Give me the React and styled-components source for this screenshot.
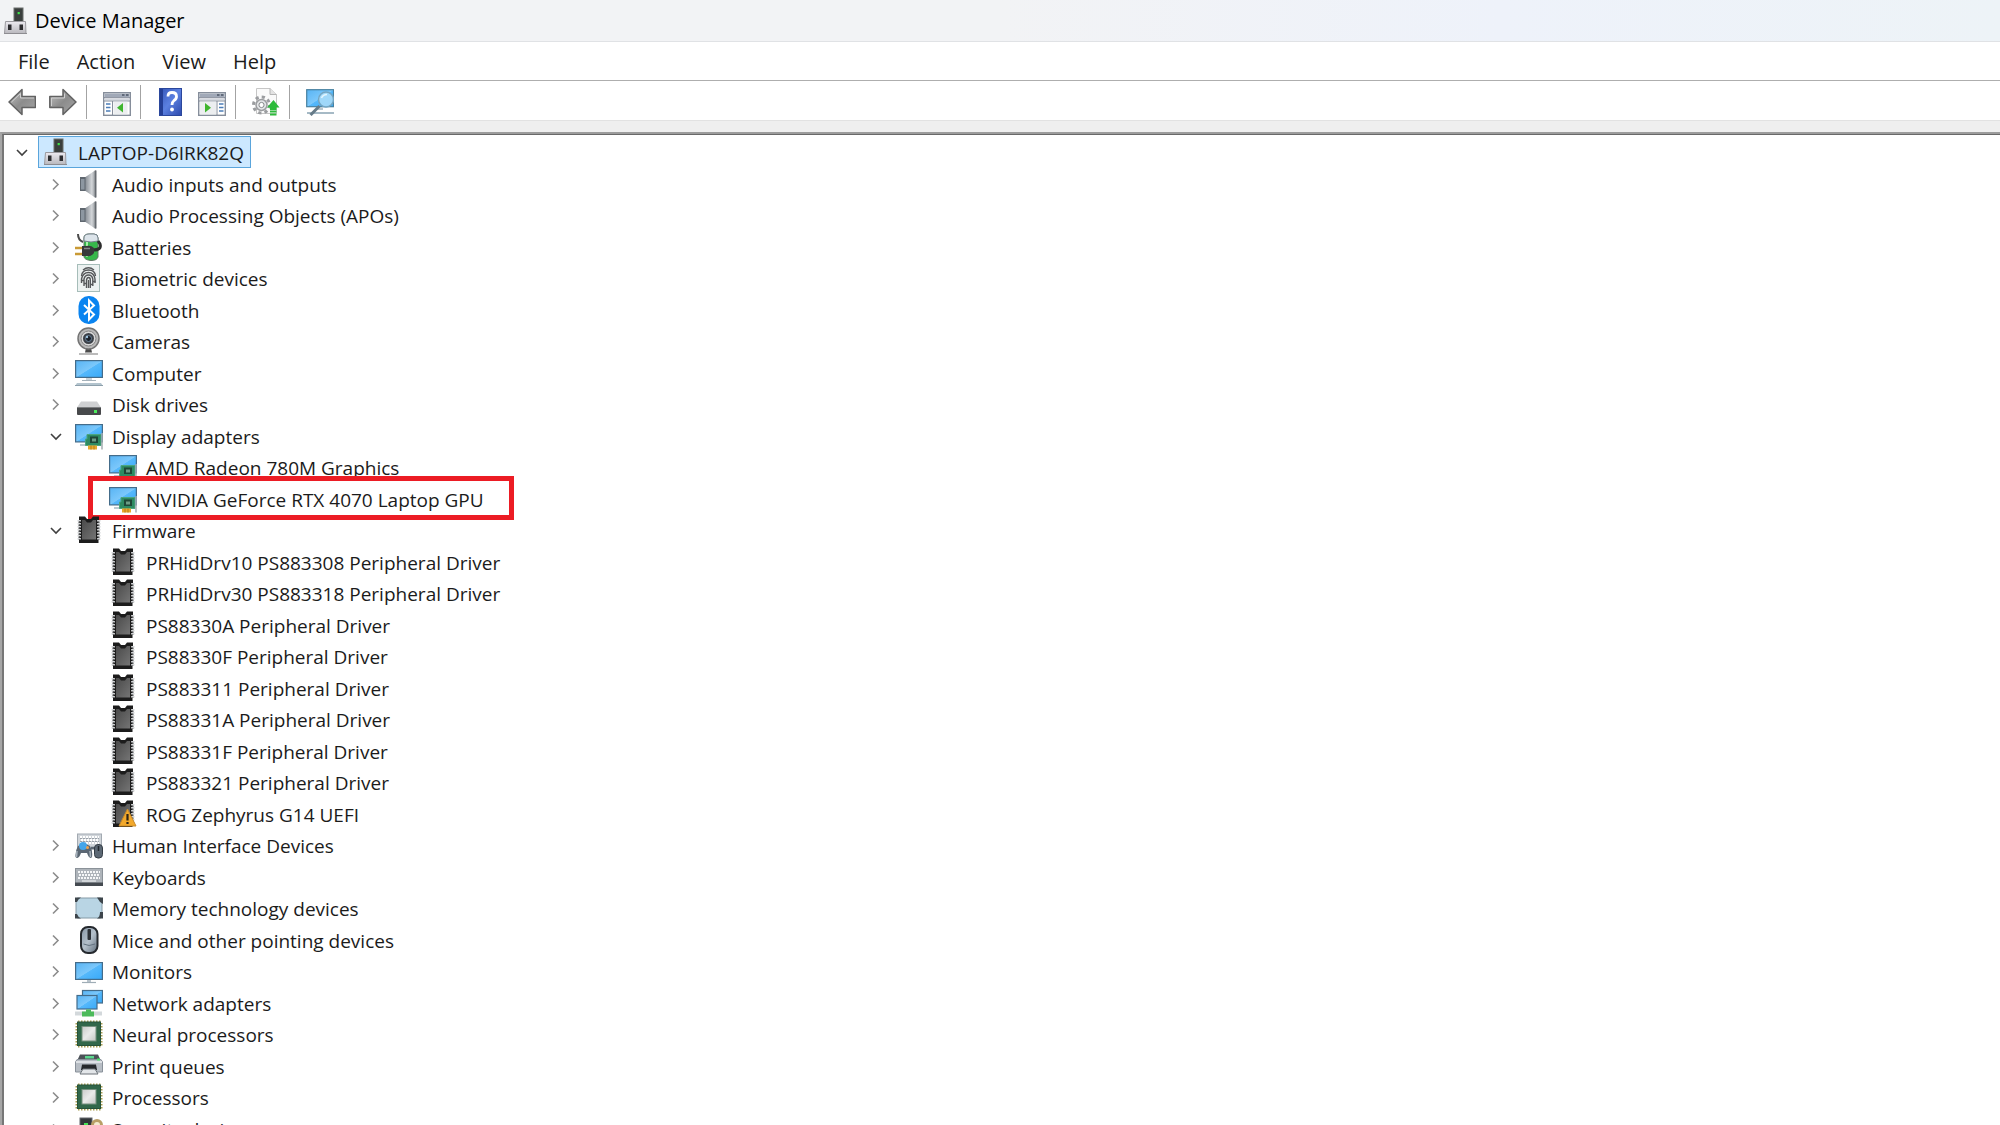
import React from 'react';
import styled, { createGlobalStyle, css } from 'styled-components';

const GlobalStyle = createGlobalStyle`
  * {
    box-sizing: border-box;
  }
  body {
    margin: 0;
    background: #fff;
    color: #1b1b1b;
    font-family: "Open Sans", "Noto Sans", sans-serif;
    font-size: 20px;
    line-height: 30px;
  }
  button {
    margin: 0;
    padding: 0;
    border: 0;
    background: none;
    color: inherit;
    font: inherit;
  }
`;

const Window = styled.div`
  display: flex;
  flex-direction: column;
  height: 100vh;
  overflow: hidden;
`;

const TitleBar = styled.header`
  display: flex;
  align-items: center;
  gap: 6px;
  flex: none;
  height: 42px;
  padding: 1px 0 0 1px;
  border-bottom: 1px solid #e0e2e5;
  background: linear-gradient(90deg, #f2f3f5 0%, #f2f3f5 50%, #eef2fa 75%, #edf3f7 100%);
`;

const Title = styled.h1`
  margin: 0;
  color: #000;
  font-size: 20px;
  font-weight: 400;
`;

const MenuBar = styled.nav`
  display: flex;
  align-items: center;
  gap: 27px;
  flex: none;
  height: 39px;
  padding: 2px 0 0 18px;
  border-bottom: 1px solid #aeaeae;
`;

const MenuButton = styled.button``;

const Toolbar = styled.div`
  display: flex;
  align-items: center;
  flex: none;
  height: 40px;
  padding: 3px 0 0 8px;
  border-bottom: 1px solid #e2e2e2;
`;

const ToolGroup = styled.div`
  display: flex;
  align-items: center;
  gap: 13px;
  height: 34px;
  padding: 0 9px 0 16px;
  border-right: 1px solid #a3a3a3;

  &:first-child {
    padding-left: 0;
  }
  &:last-child {
    border-right: 0;
  }
`;

const ToolButton = styled.button`
  display: flex;
  width: 28px;
  height: 28px;
`;

const Pane = styled.main`
  flex: 1;
  min-height: 0;
  padding-top: 11px;
  background: #efefef;
`;

const TreeFrame = styled.div`
  height: 100%;
  overflow: hidden;
  border-top: 2px solid #9c9c9c;
  border-left: 2px solid #a6a6a6;
`;

const Tree = styled.ul`
  min-height: 100%;
  margin: 0;
  padding: 1px 0 0;
  border-top: 1px solid #696969;
  border-left: 2px solid #777;
  background: #fff;
  font-size: 19px;
  list-style: none;
`;

const Row = styled.li`
  display: flex;
  align-items: stretch;
  gap: 6px;
  height: 32px;
  padding-left: ${({ $level }) => 8 + $level * 34}px;

  &:nth-child(even) {
    height: 31px;
  }
`;

const Toggle = styled.button`
  display: flex;
  align-items: center;
  justify-content: center;
  width: 20px;
`;

const ToggleSpace = styled.span`
  width: 20px;
`;

const Label = styled.span`
  position: relative;
  display: flex;
  align-items: center;
  gap: 9px;
  padding: 0 6px 0 2px;
  border: 1px solid transparent;
  white-space: nowrap;

  ${({ $selected }) => $selected && css`
    border-color: #5aa5dc;
    background: #cce8ff;
  `}

  ${({ $marked }) => $marked && css`
    &::after {
      content: '';
      position: absolute;
      inset: -8px -24px -7px -19px;
      border: 5px solid #ec1c24;
    }
  `}
`;

const Name = styled.span`
  padding-top: 2px;
`;

const Icon = styled.svg`
  display: block;
  flex: none;
  width: 28px;
  height: 28px;
`;

const Gradients = () => (
  <svg width="0" height="0" style={{ position: 'absolute' }} aria-hidden="true">
    <defs>
      <linearGradient id="screen" x1="0" y1="0" x2="1" y2="1">
        <stop offset="0" stopColor="#58b4f4" />
        <stop offset="0.5" stopColor="#7cc8fb" />
        <stop offset="0.52" stopColor="#55b8fb" />
        <stop offset="1" stopColor="#38a9f8" />
      </linearGradient>
      <linearGradient id="steel" x1="0" y1="0" x2="1" y2="0">
        <stop offset="0" stopColor="#8b9198" />
        <stop offset="0.6" stopColor="#d3d6d9" />
        <stop offset="1" stopColor="#858a8f" />
      </linearGradient>
      <linearGradient id="arrow" x1="0" y1="0" x2="1" y2="1">
        <stop offset="0" stopColor="#c4c4c4" />
        <stop offset="0.5" stopColor="#8c8c8c" />
        <stop offset="1" stopColor="#a5a5a5" />
      </linearGradient>
      <linearGradient id="chip" x1="0" y1="0" x2="1" y2="1">
        <stop offset="0" stopColor="#4a4a4a" />
        <stop offset="1" stopColor="#747474" />
      </linearGradient>
      <linearGradient id="help" x1="0" y1="0" x2="1" y2="1">
        <stop offset="0" stopColor="#3455b8" />
        <stop offset="0.5" stopColor="#5b80e0" />
        <stop offset="1" stopColor="#2c49ac" />
      </linearGradient>
      <linearGradient id="die" x1="0" y1="0" x2="1" y2="1">
        <stop offset="0" stopColor="#c9cbc9" />
        <stop offset="0.5" stopColor="#e9eae9" />
        <stop offset="1" stopColor="#c4c6c4" />
      </linearGradient>
      <linearGradient id="body" x1="0" y1="0" x2="0" y2="1">
        <stop offset="0" stopColor="#eceaf0" />
        <stop offset="1" stopColor="#b9b8bd" />
      </linearGradient>
      <linearGradient id="mouse" x1="0" y1="0" x2="1" y2="1">
        <stop offset="0" stopColor="#8494a4" />
        <stop offset="0.5" stopColor="#b4c0cb" />
        <stop offset="1" stopColor="#5d6b79" />
      </linearGradient>
    </defs>
  </svg>
);

const DeviceIcon = () => (
  <Icon viewBox="0 0 28 28">
    <rect x="13" y="1" width="9" height="14" fill="#3a3f3d" stroke="#6a6e6c" />
    <rect x="16.6" y="5" width="2.2" height="2.2" fill="#3fe04a" />
    <path d="M4.500 14.500H24.500L25 26.500H3.500Z" fill="url(#body)" stroke="#9b9a9f" />
    <path d="M3 26.500H26" stroke="#8d8c91" />
    <rect x="7" y="17.500" width="3.500" height="5.500" fill="#2d2d30" />
    <rect x="18.500" y="17.500" width="3.500" height="5.500" fill="#2d2d30" />
  </Icon>
);

const SpeakerIcon = () => (
  <Icon viewBox="0 0 28 28">
    <rect x="5" y="7" width="6" height="14" fill="#5f676f" />
    <rect x="6" y="9" width="3.500" height="10.500" fill="#8d97a1" />
    <path d="M10.500 7L20 0.500H21V27.500H20L10.500 21Z" fill="url(#steel)" />
    <path d="M19.800 0.500H21.500V27.500H19.800Z" fill="#666b70" />
  </Icon>
);

const BatteryIcon = () => (
  <Icon viewBox="0 0 28 28">
    <path d="M9 5Q9 1 14 1H19Q23 1 23 5V24Q22 27.500 16 27.500Q10 27 9 24Z" fill="#36b84a" stroke="#5e7864" />
    <path d="M9 5Q9 1 14 1H19Q23 1 23 5V8Q16 10 9 8Z" fill="#dce4ea" stroke="#77838d" />
    <path d="M12 9V24" stroke="#a8f0a8" strokeWidth="2" />
    <path d="M3 1Q3 7 8 9" fill="none" stroke="#4b4b4b" strokeWidth="2" />
    <path d="M18 17Q27 17 25 11L23 8" fill="none" stroke="#2d2d2d" strokeWidth="3" />
    <path d="M0 15H7M0 21H7" stroke="#c99a35" strokeWidth="2.5" />
    <path d="M7 13H11Q16 12 19 15V20Q16 24 11 23H7Z" fill="#37393b" />
    <path d="M9 15.500H15" stroke="#85888a" strokeWidth="1.500" />
  </Icon>
);

const FingerprintIcon = () => (
  <Icon viewBox="0 0 28 28">
    <rect x="2.500" y="0.500" width="22" height="27" fill="#ecf2f1" stroke="#a6bdb9" />
    <g fill="none" stroke="#55585a" strokeWidth="1.400">
      <path d="M8 6Q13.500 1.500 19 6" />
      <path d="M6.500 12Q7 6 13.500 6Q20 6 20.500 12" />
      <path d="M6.500 19V15Q8 8.500 13.500 8.500Q19 8.500 20 15V19" />
      <path d="M9 22V15Q10 11 13.500 11Q17 11 17.800 15V22" />
      <path d="M11.500 24V16Q12 13.500 13.500 13.500Q15.300 13.500 15.300 16V24" />
      <path d="M13.500 16V24M6.500 16.500H9M18 17.500H20.500M9 19.500H11.500M15.500 20.500H18" />
    </g>
  </Icon>
);

const BluetoothIcon = () => (
  <Icon viewBox="0 0 28 28">
    <rect x="3.500" y="0" width="21" height="28" rx="10" fill="#0a84f0" />
    <path d="M9 9L19 18.500L14 23.500V4.500L19 9.500L9 18.500" fill="none" stroke="#fff" strokeWidth="2" />
  </Icon>
);

const CameraIcon = () => (
  <Icon viewBox="0 0 28 28">
    <path d="M11 21H16L17 25.500H10Z" fill="#4b4b4b" />
    <path d="M4 27H23" stroke="#a5a5a5" strokeWidth="1.500" />
    <circle cx="13.500" cy="11.500" r="10.500" fill="#b9b9b9" stroke="#747474" strokeWidth="1.500" />
    <circle cx="13.500" cy="11.500" r="7.500" fill="#d8d8d8" stroke="#858585" />
    <circle cx="13.500" cy="11.500" r="5.500" fill="#3c4148" />
    <circle cx="13.500" cy="11.500" r="3" fill="#1b2028" stroke="#6a8399" />
    <circle cx="12" cy="10" r="1.200" fill="#9dc3de" />
  </Icon>
);

const ComputerIcon = () => (
  <Icon viewBox="0 0 28 28">
    <rect x="0.600" y="1.600" width="26.800" height="16.800" fill="url(#screen)" stroke="#446c8a" strokeWidth="1.200" />
    <path d="M11 19H17V21H11Z" fill="#c8d2d9" />
    <path d="M7 21.500H21" stroke="#a4b1ba" />
    <path d="M2 24H26L28 27H0Z" fill="#b3c4ce" />
    <path d="M0 26.500H28" stroke="#8da0ac" />
  </Icon>
);

const DiskIcon = () => (
  <Icon viewBox="0 0 28 28">
    <path d="M6 11.500H22L26 17.500H2Z" fill="#cfd0d2" />
    <rect x="2" y="17" width="24" height="8" rx="1" fill="#47494b" />
    <path d="M2 17.500H26" stroke="#7c7e80" />
    <rect x="19" y="20" width="3" height="3" fill="#4dea5c" />
  </Icon>
);

const DisplayIcon = () => (
  <Icon viewBox="0 0 28 28">
    <rect x="0.600" y="2.600" width="26.800" height="17.300" fill="url(#screen)" stroke="#446c8a" strokeWidth="1.200" />
    <path d="M5 23H12" stroke="#a4b8c4" strokeWidth="1.500" />
    <path d="M12 12.500H26V23.500H10.500V17H12Z" fill="#2e8b62" stroke="#4ba57f" />
    <path d="M15 14.500H23V21H15Z" fill="#1e4737" />
    <path d="M17 16.500H21V19.500H17Z" fill="#6c9c85" />
    <path d="M13 23.500H22V27.500H13Z" fill="#e7a92c" />
    <path d="M16 23.500V27.500M19 23.500V27.500" stroke="#b97d17" />
    <path d="M27 11V27.500" stroke="#a5adb0" strokeWidth="1.500" />
  </Icon>
);

const ChipShape = () => (
  <>
    <path d="M4 0.500H10L12 3H16L18 0.500H24V4H23.500V27H4Z" fill="#1c1c1c" />
    <path d="M7 4H10L12 6.500H16L18 4H21V23.500H7Z" fill="url(#chip)" />
    <path d="M4.200 4V24M23.800 4V24" stroke="#d4d6d8" strokeWidth="3.400" strokeDasharray="1.500 1.500" />
    <path d="M4.200 5.500V24M23.800 5.500V24" stroke="#4f5152" strokeWidth="1.400" strokeDasharray="1.500 1.500" />
  </>
);

const ChipIcon = () => (
  <Icon viewBox="0 0 28 28">
    <ChipShape />
  </Icon>
);

const ChipWarningIcon = () => (
  <Icon viewBox="0 0 28 28">
    <ChipShape />
    <path d="M18.500 9L27 26H10Z" fill="#f3a92b" stroke="#c88a2b" strokeLinejoin="round" />
    <path d="M18.500 14V20.500M18.500 22V24" stroke="#2d2417" strokeWidth="2.200" />
  </Icon>
);

const HidIcon = () => (
  <Icon viewBox="0 0 28 28">
    <rect x="2.500" y="3" width="24" height="15" fill="#d0d5da" stroke="#a2a9b1" />
    <path d="M5 6H24M6 9H24M5 12H24" stroke="#fff" strokeWidth="1.800" strokeDasharray="2 1" />
    <path d="M5 7.500H24M5 10.500H24" stroke="#9aa1a9" strokeDasharray="2 1" />
    <path d="M3 15Q9 11 15 15Q18 20 17 26Q14.500 29 12 22H6Q3.500 29 0.500 26Q0 20 3 15Z" fill="#5b6773" />
    <path d="M2 20L1.500 26M15 20L15.500 26" stroke="#a9b4be" strokeWidth="1.500" />
    <circle cx="8" cy="15" r="4" fill="#44a5ea" />
    <circle cx="12.500" cy="16.500" r="1.500" fill="#f2a24b" />
    <path d="M16 17H20" stroke="#5b6773" strokeWidth="2.500" />
    <rect x="19.500" y="13.500" width="8" height="13.500" rx="3.500" fill="#5c6874" stroke="#353d45" />
    <path d="M23.500 15V20" stroke="#22282e" strokeWidth="1.500" />
  </Icon>
);

const KeyboardIcon = () => (
  <Icon viewBox="0 0 28 28">
    <rect x="0.500" y="5.500" width="27" height="15" fill="#aeb4ba" stroke="#8b9299" />
    <path d="M3 9H25M4 12H25M3 15H25" stroke="#f5f7f8" strokeWidth="2" strokeDasharray="2 1" />
    <path d="M7 18H21" stroke="#f5f7f8" />
    <rect x="0" y="19.500" width="28" height="3.500" fill="#444a50" />
  </Icon>
);

const MemoryIcon = () => (
  <Icon viewBox="0 0 28 28">
    <rect x="1" y="4" width="26" height="20" rx="2" fill="#b9d5e4" stroke="#849aa6" />
    <path d="M0 8V3.500H6Q3 5 2 8ZM22 3.500H28V10L25 8ZM0 20V24.500H6Q3 23 2 20ZM28 18V24.500H22Q25 23 25 18Z" fill="#3d454b" />
  </Icon>
);

const MouseIcon = () => (
  <Icon viewBox="0 0 28 28">
    <rect x="6" y="1" width="16.500" height="26" rx="7" fill="url(#mouse)" stroke="#25292e" strokeWidth="2" />
    <rect x="12.500" y="3" width="3.500" height="11" rx="1" fill="#2d3238" />
    <path d="M8.500 18Q14 21 20 18" fill="none" stroke="#62717f" />
  </Icon>
);

const MonitorIcon = () => (
  <Icon viewBox="0 0 28 28">
    <rect x="0.600" y="5.600" width="26.800" height="16.800" fill="url(#screen)" stroke="#446c8a" strokeWidth="1.200" />
    <path d="M12 23H16V25H12Z" fill="#b9c4cc" />
    <path d="M7 25.500H21" stroke="#9fadb6" strokeWidth="1.200" />
  </Icon>
);

const NetworkIcon = () => (
  <Icon viewBox="0 0 28 28">
    <rect x="7.500" y="1.500" width="20" height="12.500" fill="url(#screen)" stroke="#446c8a" strokeWidth="1.200" />
    <rect x="2" y="6.500" width="20" height="13.500" fill="url(#screen)" stroke="#446c8a" strokeWidth="1.200" />
    <path d="M0 24.500H27" stroke="#d3d8db" strokeWidth="4" />
    <path d="M11 20.500H16V22.500H19V27.500H7V22.500H11Z" fill="#4cba5b" />
  </Icon>
);

const ProcessorIcon = () => (
  <Icon viewBox="0 0 28 28">
    <path d="M3 1.500H26M3 26.500H26" stroke="#a79d52" strokeWidth="2" strokeDasharray="1.500 1.500" />
    <path d="M1.500 3V26M26.500 3V26" stroke="#a79d52" strokeWidth="2" strokeDasharray="1.500 1.500" />
    <rect x="2.500" y="2" width="23" height="23.500" fill="#31674a" stroke="#26523a" />
    <rect x="7" y="6.500" width="14" height="14.500" fill="url(#die)" stroke="#77917f" />
  </Icon>
);

const PrinterIcon = () => (
  <Icon viewBox="0 0 28 28">
    <path d="M5 2.500H23L26 9H2Z" fill="#4b5157" />
    <path d="M10 4H19V6.500H10Z" fill="#5ad78d" />
    <path d="M2 7.500H26L27.500 10V20H0.500V10Z" fill="#b7bdc4" stroke="#89919a" />
    <path d="M1 10H27" stroke="#dde1e5" strokeWidth="2" />
    <rect x="22" y="6.500" width="3" height="2" fill="#4ce06c" />
    <path d="M7 12.500H21L22 18H6Z" fill="#25282b" />
    <path d="M8 17H20L23 22H5Z" fill="#e3e6e9" stroke="#6c7379" />
  </Icon>
);

const SecurityIcon = () => (
  <Icon viewBox="0 0 28 28">
    <rect x="5" y="3" width="12" height="22" fill="#32363a" stroke="#62676c" />
    <rect x="9" y="8" width="4" height="5" fill="#47e356" />
    <circle cx="22" cy="10" r="4.500" fill="#f4ead0" stroke="#b99f66" strokeWidth="3" />
    <path d="M22 14V26" stroke="#b99f66" strokeWidth="3" />
  </Icon>
);

const BackIcon = () => (
  <Icon viewBox="0 0 28 28">
    <path d="M1 14L14 1.500V8.500H27.500V19.500H14V26.500Z" fill="url(#arrow)" stroke="#626262" strokeWidth="1.500" strokeLinejoin="round" />
    <path d="M3.500 14L12.500 5.500V10H26" fill="none" stroke="#cfcfcf" />
  </Icon>
);

const ForwardIcon = () => (
  <Icon viewBox="0 0 28 28">
    <path d="M27 14L14 1.500V8.500H0.800V19.500H14V26.500Z" fill="url(#arrow)" stroke="#626262" strokeWidth="1.500" strokeLinejoin="round" />
    <path d="M2.500 18V10H15.500V5.500" fill="none" stroke="#cfcfcf" />
  </Icon>
);

// Window frame shared by the console tree and action pane buttons
const PanelFrame = () => (
  <>
    <rect x="0.700" y="4.700" width="26.600" height="22.600" fill="#fff" stroke="#868e9b" strokeWidth="1.400" />
    <rect x="1.500" y="5.500" width="25" height="3.500" fill="#a1a9b8" />
    <path d="M19 7H21.500M23 7H25.500" stroke="#4c5566" strokeWidth="1.600" />
    <path d="M1 9.700H27" stroke="#7a8290" />
    <rect x="1.500" y="10.300" width="25" height="2" fill="#d4d8df" />
    <path d="M1 13H27" stroke="#868e9b" />
  </>
);

const TreePanelIcon = () => (
  <Icon viewBox="0 0 28 28">
    <PanelFrame />
    <path d="M9.500 13V27" stroke="#868e9b" />
    <path d="M3 16H7.500M3 19.500H7.500M3 23H7.500" stroke="#4c7eb8" strokeWidth="1.500" />
    <rect x="10.500" y="13.700" width="14" height="12.500" fill="#eceef0" />
    <path d="M20 15V24.500L14 19.800Z" fill="#3fb52e" />
  </Icon>
);

const ActionPanelIcon = () => (
  <Icon viewBox="0 0 28 28">
    <PanelFrame />
    <path d="M19 13V27" stroke="#868e9b" />
    <path d="M21 16H25.500M21 19.500H25.500M21 23H25.500" stroke="#4c7eb8" strokeWidth="1.500" />
    <rect x="2" y="13.700" width="16" height="12.500" fill="#eceef0" />
    <path d="M7 15V24.500L13 19.800Z" fill="#3fb52e" />
  </Icon>
);

const HelpIcon = () => (
  <Icon viewBox="0 0 28 28">
    <rect x="2.500" y="0.500" width="22" height="27" fill="url(#help)" stroke="#2b479c" />
    <path d="M3 1H6V27H3Z" fill="#243f96" />
    <path d="M11 8.500Q11 4.500 15 4.500Q19.500 4.500 19.500 8.500Q19.500 11 17 12.500Q15 14 15 17" fill="none" stroke="#fff" strokeWidth="2.800" />
    <circle cx="15" cy="21.500" r="1.900" fill="#fff" />
  </Icon>
);

const UpdateIcon = () => (
  <Icon viewBox="0 0 28 28">
    <path d="M4.500 0.500H18L24.500 6.500V25.500H4.500Z" fill="#fafafa" stroke="#c6c6c6" />
    <path d="M18 0.500V6.500H24.500" fill="#e3e3e3" stroke="#b5b5b5" />
    <circle cx="9.500" cy="17" r="8" fill="none" stroke="#9b9da0" strokeWidth="3" strokeDasharray="3.200 3.080" />
    <circle cx="9.500" cy="17" r="5.500" fill="#e4e6e8" stroke="#9b9da0" strokeWidth="1.500" />
    <circle cx="9.500" cy="17" r="2.600" fill="#fff" stroke="#85888b" />
    <path d="M21.500 12L27.500 19.500H24.500V22H18V19.500H15Z" fill="#2dbb3b" />
    <path d="M18 23.500H24.500M18 26.500H24.500" stroke="#2dbb3b" strokeWidth="1.800" />
  </Icon>
);

const ScanIcon = () => (
  <Icon viewBox="0 0 28 28">
    <rect x="0.700" y="1.700" width="26.800" height="17" fill="url(#screen)" stroke="#47809f" strokeWidth="1.200" />
    <path d="M11 19.500H17V22H11Z" fill="#bac6cd" />
    <path d="M1 25H28" stroke="#a6bac6" strokeWidth="2" />
    <path d="M13.500 18L4.500 27" stroke="#667b88" strokeWidth="3" />
    <circle cx="20" cy="11.500" r="7.500" fill="#a9dcf8" fillOpacity="0.900" stroke="#74a6c3" strokeWidth="1.500" />
    <path d="M15.500 10Q17 6.500 21 6.500" fill="none" stroke="#e3f5fe" strokeWidth="1.500" />
  </Icon>
);

const Chevron = ({ open }) => (
  <svg width="12" height="14" viewBox="0 0 12 14" fill="none" strokeWidth="1.600">
    {open
      ? <path d="M1 5L6 10L11 5" stroke="#404040" />
      : <path d="M3 2.500L8 7.500L3 12.500" stroke="#8c8c8c" />}
  </svg>
);

const menus = ['File', 'Action', 'View', 'Help'];

const tools = [
  [
    { label: 'Back', icon: BackIcon },
    { label: 'Forward', icon: ForwardIcon },
  ],
  [{ label: 'Show/Hide Console Tree', icon: TreePanelIcon }],
  [
    { label: 'Help', icon: HelpIcon },
    { label: 'Show/Hide Action Pane', icon: ActionPanelIcon },
  ],
  [{ label: 'Update driver', icon: UpdateIcon }],
  [{ label: 'Scan for hardware changes', icon: ScanIcon }],
];

const devices = [
  { name: 'LAPTOP-D6IRK82Q', icon: DeviceIcon, level: 0, open: true, selected: true },
  { name: 'Audio inputs and outputs', icon: SpeakerIcon, level: 1 },
  { name: 'Audio Processing Objects (APOs)', icon: SpeakerIcon, level: 1 },
  { name: 'Batteries', icon: BatteryIcon, level: 1 },
  { name: 'Biometric devices', icon: FingerprintIcon, level: 1 },
  { name: 'Bluetooth', icon: BluetoothIcon, level: 1 },
  { name: 'Cameras', icon: CameraIcon, level: 1 },
  { name: 'Computer', icon: ComputerIcon, level: 1 },
  { name: 'Disk drives', icon: DiskIcon, level: 1 },
  { name: 'Display adapters', icon: DisplayIcon, level: 1, open: true },
  { name: 'AMD Radeon 780M Graphics', icon: DisplayIcon, level: 2 },
  { name: 'NVIDIA GeForce RTX 4070 Laptop GPU', icon: DisplayIcon, level: 2, marked: true },
  { name: 'Firmware', icon: ChipIcon, level: 1, open: true },
  { name: 'PRHidDrv10 PS883308 Peripheral Driver', icon: ChipIcon, level: 2 },
  { name: 'PRHidDrv30 PS883318 Peripheral Driver', icon: ChipIcon, level: 2 },
  { name: 'PS88330A Peripheral Driver', icon: ChipIcon, level: 2 },
  { name: 'PS88330F Peripheral Driver', icon: ChipIcon, level: 2 },
  { name: 'PS883311 Peripheral Driver', icon: ChipIcon, level: 2 },
  { name: 'PS88331A Peripheral Driver', icon: ChipIcon, level: 2 },
  { name: 'PS88331F Peripheral Driver', icon: ChipIcon, level: 2 },
  { name: 'PS883321 Peripheral Driver', icon: ChipIcon, level: 2 },
  { name: 'ROG Zephyrus G14 UEFI', icon: ChipWarningIcon, level: 2 },
  { name: 'Human Interface Devices', icon: HidIcon, level: 1 },
  { name: 'Keyboards', icon: KeyboardIcon, level: 1 },
  { name: 'Memory technology devices', icon: MemoryIcon, level: 1 },
  { name: 'Mice and other pointing devices', icon: MouseIcon, level: 1 },
  { name: 'Monitors', icon: MonitorIcon, level: 1 },
  { name: 'Network adapters', icon: NetworkIcon, level: 1 },
  { name: 'Neural processors', icon: ProcessorIcon, level: 1 },
  { name: 'Print queues', icon: PrinterIcon, level: 1 },
  { name: 'Processors', icon: ProcessorIcon, level: 1 },
  { name: 'Security devices', icon: SecurityIcon, level: 1 },
];

const Device = ({ item }) => {
  const DeviceGlyph = item.icon;
  return (
    <Row
      role="treeitem"
      aria-level={item.level + 1}
      aria-selected={Boolean(item.selected)}
      $level={item.level}
    >
      {item.level < 2 ? (
        <Toggle aria-label={`Toggle ${item.name}`} aria-expanded={Boolean(item.open)}>
          <Chevron open={item.open} />
        </Toggle>
      ) : (
        <ToggleSpace />
      )}
      <Label $selected={item.selected} $marked={item.marked}>
        <DeviceGlyph />
        <Name>{item.name}</Name>
      </Label>
    </Row>
  );
};

const App = () => {
  return (
    <Window>
      <GlobalStyle />
      <Gradients />
      <TitleBar>
        <DeviceIcon />
        <Title>Device Manager</Title>
      </TitleBar>
      <MenuBar>
        {menus.map((menu) => (
          <MenuButton key={menu}>{menu}</MenuButton>
        ))}
      </MenuBar>
      <Toolbar role="toolbar" aria-label="Device tools">
        {tools.map((group) => (
          <ToolGroup key={group[0].label}>
            {group.map(({ label, icon: ToolIcon }) => (
              <ToolButton key={label} aria-label={label}>
                <ToolIcon />
              </ToolButton>
            ))}
          </ToolGroup>
        ))}
      </Toolbar>
      <Pane>
        <TreeFrame>
          <Tree role="tree" aria-label="Devices">
            {devices.map((item) => (
              <Device key={item.name} item={item} />
            ))}
          </Tree>
        </TreeFrame>
      </Pane>
    </Window>
  );
};

export default App;
